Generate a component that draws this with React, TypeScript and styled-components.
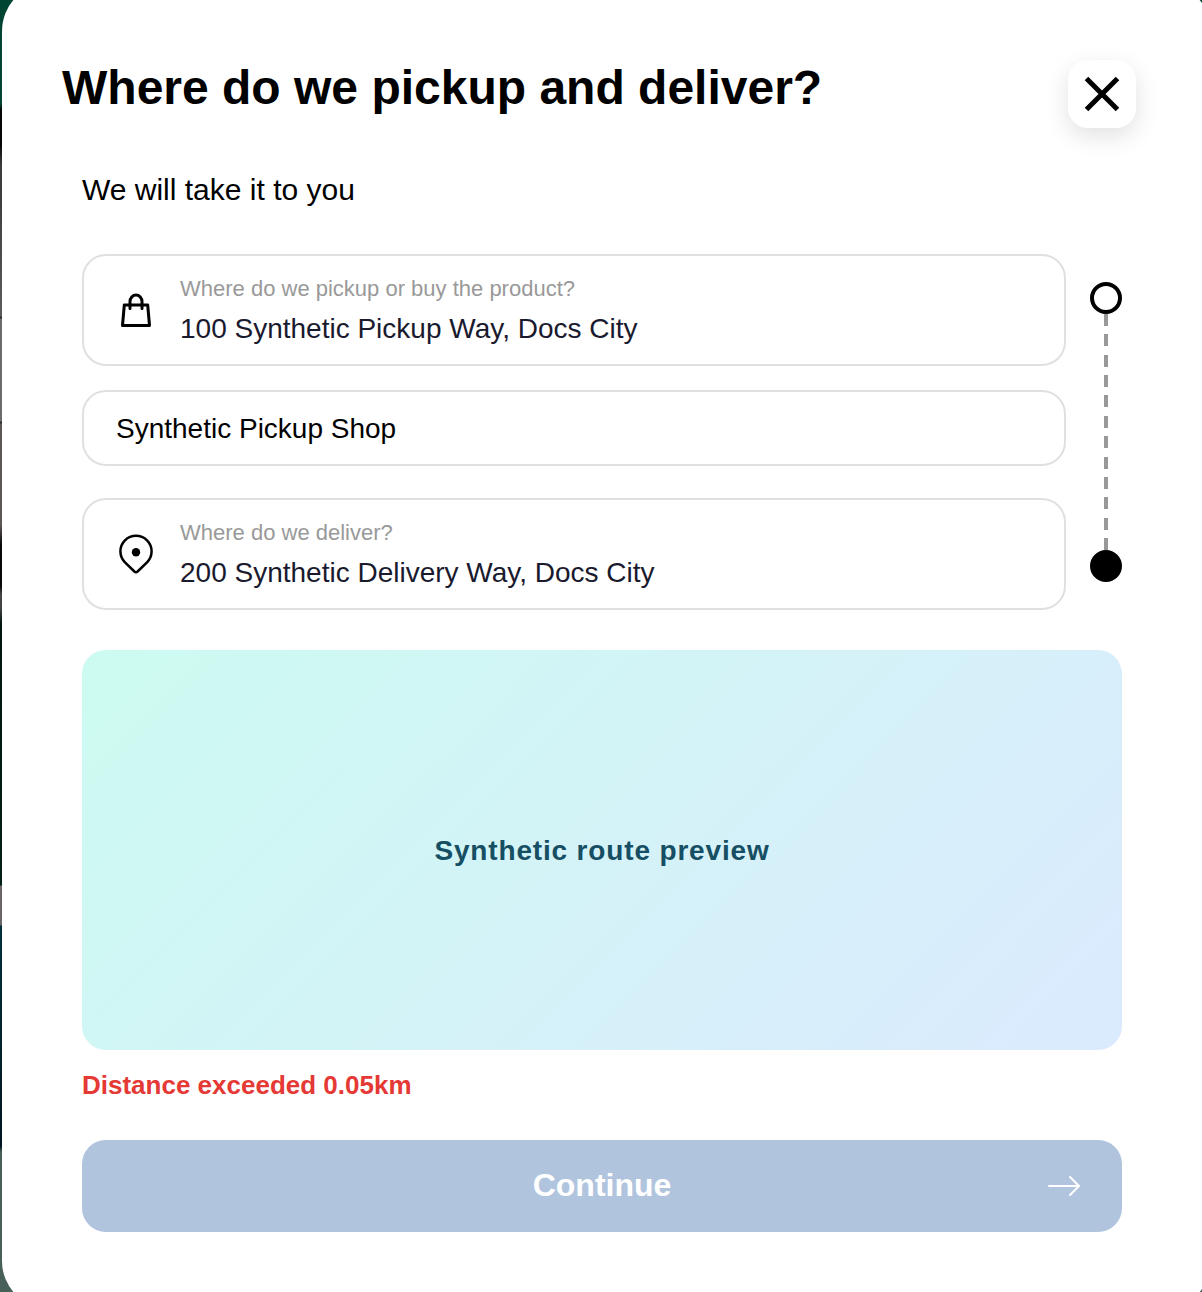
import React, { useState } from "react";
import styled, { createGlobalStyle } from "styled-components";

const GlobalStyle = createGlobalStyle`
  *, *::before, *::after { box-sizing: border-box; }
  body {
    margin: 0;
    font-family: "Liberation Sans", Arial, Helvetica, sans-serif;
    color: #000;
  }
  h1, p { margin: 0; }
  button, input { font: inherit; }
`;

const Backdrop = styled.div`
  display: flow-root;
  min-height: 100vh;
  overflow: hidden;
  background: linear-gradient(
    180deg,
    #004432 0,
    #004432 104px,
    #050505 110px,
    #050505 144px,
    #3c3c3c 165px,
    #3c3c3c 190px,
    #5c5c5c 316px,
    #2c2c2c 317px,
    #2c2c2c 318px,
    #6c6c6c 319px,
    #6c6c6c 421px,
    #2c2c2c 422px,
    #2c2c2c 423px,
    #5c5654 424px,
    #5c5654 525px,
    #080808 545px,
    #080808 586px,
    #444 594px,
    #444 608px,
    #00160f 624px,
    #002018 885px,
    #6a6465 886px,
    #6a6465 925px,
    #00303a 926px,
    #001522 1146px,
    #48605a 1152px,
    #48605a 100%
  );
`;

const Dialog = styled.main`
  display: flex;
  flex-direction: column;
  margin: -17px -9px -17px 2px;
  padding: 77px 89px 77px 80px;
  border-radius: 48px;
  background: #fff;
`;

const Header = styled.header`
  display: flex;
  align-items: flex-start;
  justify-content: space-between;
  gap: 24px;
  margin: 0 -14px 0 -20px;
`;

const Title = styled.h1`
  font-size: 48px;
  line-height: 56px;
  font-weight: 700;
`;

const CloseButton = styled.button`
  display: grid;
  place-items: center;
  flex: none;
  width: 68px;
  height: 68px;
  padding: 0;
  border: 0;
  border-radius: 20px;
  background: #fff;
  color: #000;
  box-shadow: 0 8px 24px rgba(0, 0, 0, 0.12);
  cursor: pointer;
`;

const Subtitle = styled.p`
  margin-top: 44px;
  font-size: 30px;
  line-height: 36px;
`;

const Route = styled.section`
  display: flex;
  gap: 24px;
  margin-top: 46px;
`;

const Fields = styled.div`
  display: flex;
  flex: 1;
  flex-direction: column;
  min-width: 0;
`;

const Field = styled.label<{ $gap?: number }>`
  display: flex;
  align-items: center;
  gap: 24px;
  margin-top: ${({ $gap = 0 }) => $gap}px;
  padding: 16px 32px 14px;
  border: 2px solid #e0e0e0;
  border-radius: 24px;
  background: #fff;

  svg {
    flex: none;
    overflow: visible;
  }
`;

const FieldText = styled.span`
  display: flex;
  flex: 1;
  flex-direction: column;
  gap: 2px;
  min-width: 0;
`;

const Caption = styled.span`
  font-size: 22px;
  line-height: 34px;
  color: #999;
`;

const TextInput = styled.input<{ $tone: string }>`
  width: 100%;
  min-width: 0;
  height: 42px;
  padding: 0;
  border: 0;
  outline: 0;
  background: transparent;
  font-size: 28px;
  line-height: 42px;
  color: ${({ $tone }) => $tone};
`;

const Track = styled.div`
  display: flex;
  flex-direction: column;
  align-items: center;
  width: 32px;
  padding: 28px 0;
`;

const Stop = styled.span<{ $filled?: boolean }>`
  width: 32px;
  height: 32px;
  border: 4px solid #000;
  border-radius: 50%;
  background: ${({ $filled }) => ($filled ? "#000" : "#fff")};
`;

const DashedLine = styled.span`
  display: flex;
  flex: 1;
  flex-direction: column;
  justify-content: space-between;
`;

const Dash = styled.span`
  width: 4px;
  height: 12px;
  background: #999;
`;

const MapPreview = styled.section`
  display: grid;
  place-items: center;
  height: 400px;
  margin-top: 40px;
  padding-top: 2px;
  border-radius: 24px;
  background: linear-gradient(135deg, #ccfbf1, #dbeafe);
  color: #164e63;
  font-size: 28px;
  line-height: 40px;
  font-weight: 700;
  letter-spacing: 0.03em;
`;

const ErrorText = styled.p`
  margin-top: 18px;
  font-size: 26px;
  line-height: 34px;
  font-weight: 700;
  color: #e53935;
`;

const ContinueButton = styled.button`
  display: grid;
  grid-template-columns: 1fr auto 1fr;
  align-items: center;
  min-height: 92px;
  margin-top: 38px;
  padding: 0 42px;
  border: 0;
  border-radius: 24px;
  background: #b0c4de;
  color: #fff;
  font-size: 32px;
  line-height: 40px;
  font-weight: 700;

  span {
    grid-column: 2;
    padding-bottom: 2px;
  }
  svg { justify-self: end; }
`;

const CloseIcon = () => (
  <svg width="36" height="36" viewBox="0 0 36 36" fill="none" stroke="currentColor" strokeWidth="5" aria-hidden="true">
    <path d="M2.500 2.500 33.500 33.500M33.500 2.500 2.500 33.500" />
  </svg>
);

const BagIcon = () => (
  <svg width="40" height="40" viewBox="0 1 40 40" fill="none" stroke="#000" strokeWidth="3" strokeLinecap="round" strokeLinejoin="round" aria-hidden="true">
    <path d="M8.300 15H31.700L33.500 35.500H6.500Z" />
    <path d="M14 18.500V11.500A6 6.500 0 0 1 26 11.500V18.500" />
  </svg>
);

const PinIcon = () => (
  <svg width="40" height="40" viewBox="0 1 40 40" fill="none" aria-hidden="true">
    <path
      d="M18.400 37.500L9 28.400A15.600 15.600 0 1 1 31 28.400L21.600 37.500Q20 38.900 18.400 37.500Z"
      stroke="#000"
      strokeWidth="2.500"
    />
    <circle cx="20" cy="18.300" r="4.200" fill="#000" />
  </svg>
);

const ArrowIcon = () => (
  <svg width="32" height="24" viewBox="0 0 32 24" fill="none" stroke="currentColor" strokeWidth="2" strokeLinecap="round" strokeLinejoin="round" aria-hidden="true">
    <path d="M1 12H31M22 3 31 12 22 21" />
  </svg>
);

const dashes = Array.from({ length: 12 }, (_, index) => index);

export default function App() {
  const [pickup, setPickup] = useState("100 Synthetic Pickup Way, Docs City");
  const [shop, setShop] = useState("Synthetic Pickup Shop");
  const [delivery, setDelivery] = useState("200 Synthetic Delivery Way, Docs City");

  return (
    <>
      <GlobalStyle />
      <Backdrop>
        <Dialog>
          <Header>
            <Title>Where do we pickup and deliver?</Title>
            <CloseButton type="button" aria-label="Close">
              <CloseIcon />
            </CloseButton>
          </Header>
          <Subtitle>We will take it to you</Subtitle>
          <Route>
            <Fields>
              <Field>
                <BagIcon />
                <FieldText>
                  <Caption>Where do we pickup or buy the product?</Caption>
                  <TextInput $tone="#1a1a2e" value={pickup} onChange={(e) => setPickup(e.target.value)} />
                </FieldText>
              </Field>
              <Field $gap={24}>
                <TextInput $tone="#000" aria-label="Shop name" value={shop} onChange={(e) => setShop(e.target.value)} />
              </Field>
              <Field $gap={32}>
                <PinIcon />
                <FieldText>
                  <Caption>Where do we deliver?</Caption>
                  <TextInput $tone="#1a1a2e" value={delivery} onChange={(e) => setDelivery(e.target.value)} />
                </FieldText>
              </Field>
            </Fields>
            <Track aria-hidden="true">
              <Stop />
              <DashedLine>
                {dashes.map((dash) => (
                  <Dash key={dash} />
                ))}
              </DashedLine>
              <Stop $filled />
            </Track>
          </Route>
          <MapPreview>Synthetic route preview</MapPreview>
          <ErrorText role="alert">Distance exceeded 0.05km</ErrorText>
          <ContinueButton type="button" disabled>
            <span>Continue</span>
            <ArrowIcon />
          </ContinueButton>
        </Dialog>
      </Backdrop>
    </>
  );
}
